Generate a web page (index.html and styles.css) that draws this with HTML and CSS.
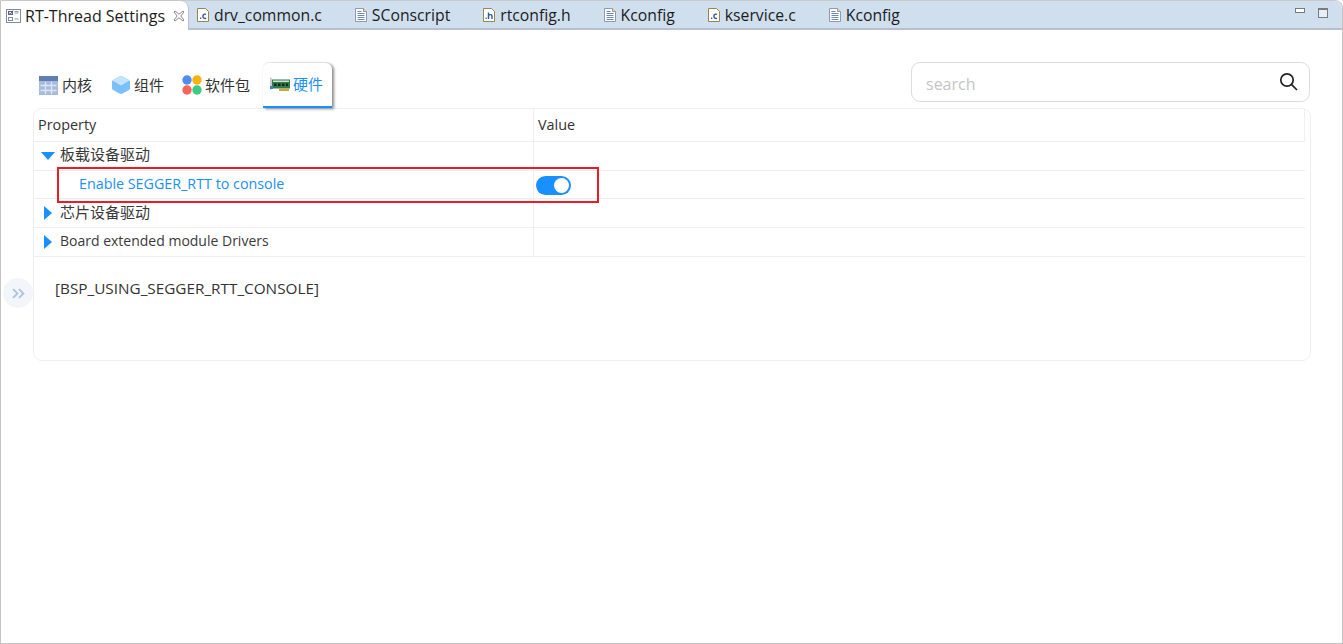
FILE: index.html
```html
<!DOCTYPE html>
<html lang="zh">
<head>
<meta charset="utf-8">
<title>RT-Thread Settings</title>
<link rel="stylesheet" href="styles.css">
</head>
<body>
<div class="window">
  <div class="editor-tabs">
    <div class="etab active">
      <svg class="eicon" viewBox="0 0 16 16"><rect x=".5" y="1.500" width="14" height="13" fill="#fff" stroke="#7f8ea3"/><rect x="2.500" y="3.500" width="4" height="3" fill="none" stroke="#667"/><path d="M3 4.500l1.500 1.500 2.500-3.500" fill="none" stroke="#3a5a8c"/><path d="M8.500 5h4M8.500 11h4M8.500 3.500h4" stroke="#8a9ab0"/><rect x="2.500" y="9.500" width="4" height="3" fill="none" stroke="#7f8ea3"/></svg>
      <span class="etitle">RT-Thread Settings</span>
      <svg class="eclose" viewBox="0 0 12 12"><path d="M2 1l4 3.200L10 1l1 1-3.200 4L11 10l-1 1-4-3.200L2 11l-1-1 3.200-4L1 2z" fill="#fff" stroke="#8a8a8a"/></svg>
    </div>
    <div class="etab"><svg class="eicon" viewBox="0 0 16 16"><use href="#file-c"/></svg><span class="etitle">drv_common.c</span></div>
    <div class="etab"><svg class="eicon" viewBox="0 0 16 16"><use href="#file-text"/></svg><span class="etitle">SConscript</span></div>
    <div class="etab"><svg class="eicon" viewBox="0 0 16 16"><use href="#file-h"/></svg><span class="etitle">rtconfig.h</span></div>
    <div class="etab"><svg class="eicon" viewBox="0 0 16 16"><use href="#file-text"/></svg><span class="etitle">Kconfig</span></div>
    <div class="etab"><svg class="eicon" viewBox="0 0 16 16"><use href="#file-c"/></svg><span class="etitle">kservice.c</span></div>
    <div class="etab"><svg class="eicon" viewBox="0 0 16 16"><use href="#file-text"/></svg><span class="etitle">Kconfig</span></div>
    <div class="win-controls">
      <span class="min-btn"></span>
      <span class="max-btn"></span>
    </div>
  </div>

  <div class="content">
    <div class="toolbar">
      <div class="cat-tabs">
        <div class="cat cat-kernel">
          <svg class="cat-icon" viewBox="0 0 20 20"><rect y="1" width="19" height="19" fill="#a9bbdc"/><rect y="1" width="19" height="5" fill="#5f7fb5"/><path d="M1.500 10.500h16M1.500 15.500h16M6.500 7v12M12.500 7v12" stroke="#dfe6f3" stroke-width="1.300"/></svg>
          <span>内核</span>
        </div>
        <div class="cat cat-comp">
          <svg class="cat-icon" viewBox="0 0 20 20"><path d="M8.500 1.500a3 3 0 0 1 3 0l6.500 3.600a2 2 0 0 1 1 1.700v6.400a2 2 0 0 1-1 1.700l-6.500 3.600a3 3 0 0 1-3 0L2 14.900a2 2 0 0 1-1-1.700V6.800a2 2 0 0 1 1-1.700z" fill="#7cc0fa"/><path d="M8.500 1.500a3 3 0 0 1 3 0L18.500 5.500 10 10.500 1.500 5.500z" fill="#c4e3fd"/></svg>
          <span>组件</span>
        </div>
        <div class="cat cat-pkg">
          <svg class="cat-icon" viewBox="0 0 20 20"><circle cx="5" cy="5" r="4.700" fill="#4d8df5"/><circle cx="15" cy="5" r="4.700" fill="#fbb10f"/><circle cx="5" cy="15" r="4.700" fill="#f8635a"/><circle cx="15" cy="15" r="4.700" fill="#3ccb7f"/></svg>
          <span>软件包</span>
        </div>
        <div class="cat cat-hw">
          <svg class="cat-icon hw-icon" viewBox="0 0 20 16"><path d="M0 1l2 1.500v11H0z" fill="#c8ccc8"/><path d="M2 3.500h18v9H2z" fill="#2f7a4c"/><path d="M3 4.500h16v1.500H3z" fill="#d6e4cf"/><path d="M4 7.500h2.500v2.500H4zM8 7.500h2.500v2.500H8zM12 7.500h2.500v2.500H12zM16 7.500h2v2.500h-2z" fill="#16281c"/><path d="M9 12.500h10V15H9z" fill="#cda93a"/><path d="M0 10h3v3H0z" fill="#3f7fd0"/></svg>
          <span>硬件</span>
        </div>
      </div>
      <div class="search">
        <span class="search-text">search</span>
        <svg class="search-icon" viewBox="0 0 20 20"><circle cx="8" cy="8" r="6.200" fill="none" stroke="#222" stroke-width="1.700"/><path d="M12.600 12.600l5.400 5.400" stroke="#222" stroke-width="1.700"/></svg>
      </div>
    </div>

    <div class="panel">
      <div class="row head">
        <div class="c1"><span>Property</span></div>
        <div class="c2"><span>Value</span></div>
      </div>
      <div class="row r-open">
        <div class="c1 tree"><svg class="arrow-d" viewBox="0 0 14 8"><path d="M0 0h14L7 8z"/></svg><span>板载设备驱动</span></div>
        <div class="c2"></div>
      </div>
      <div class="row r-sel">
        <div class="c1 child"><span>Enable SEGGER_RTT to console</span></div>
        <div class="c2"><span class="switch"><span class="knob"></span></span></div>
      </div>
      <div class="row r-chip">
        <div class="c1 tree"><svg class="arrow-r" viewBox="0 0 8 14"><path d="M0 0l8 7-8 7z"/></svg><span>芯片设备驱动</span></div>
        <div class="c2"></div>
      </div>
      <div class="row r-board">
        <div class="c1 tree"><svg class="arrow-r" viewBox="0 0 8 14"><path d="M0 0l8 7-8 7z"/></svg><span>Board extended module Drivers</span></div>
        <div class="c2"></div>
      </div>
      <div class="desc">[BSP_USING_SEGGER_RTT_CONSOLE]</div>
    </div>
    <div class="collapse-btn"><svg viewBox="0 0 12 10"><path d="M1 1l4 4-4 4M6.500 1l4 4-4 4" fill="none" stroke="#a9c3e0" stroke-width="1.700"/></svg></div>
    <div class="red-box"></div>
  </div>
</div>

<svg class="defs" width="0" height="0">
  <defs>
    <g id="file-base"><path d="M2.500 1.500h8l3 3v10h-11z" fill="#fff" stroke="#9a8450"/></g>
    <g id="file-c"><use href="#file-base"/><path d="M5 10.500h1.300V12H5z" fill="#3a5a8c"/><path d="M11 7.300a2.200 2.200 0 1 0 0 4" fill="none" stroke="#2d5a9c" stroke-width="1.400"/></g>
    <g id="file-h"><use href="#file-base"/><path d="M4.500 10.500h1.300V12H4.500z" fill="#3a5a8c"/><path d="M7.500 5.500V12M7.500 8.500c1-1.200 3.500-1.200 3.500 .5V12" fill="none" stroke="#2d5a9c" stroke-width="1.400"/></g>
    <g id="file-text"><path d="M2.500 1.500h8l3 3v10h-11z" fill="#fff" stroke="#8d9ab5"/><path d="M10.500 1.500v3h3" fill="#e5dcbc" stroke="#a39a78"/><path d="M4.500 4.500h4M4.500 6.500h7M4.500 8.500h7M4.500 10.500h7M4.500 12.500h7" stroke="#6f86b8"/></g>
  </defs>
</svg>
</body>
</html>
```
FILE: styles.css
```css
* { box-sizing: border-box; }
html, body { margin: 0; padding: 0; height: 100%; background: #fff; }
body { font-family: "Open Sans", "Noto Sans CJK SC", sans-serif; color: #333; overflow: hidden; }
.defs { position: absolute; }

.window {
  height: 644px;
  border: 1px solid #c4c4c4;
  border-top: 1px solid #c9c9c9;
  border-radius: 0 8px 0 0;
  display: flex;
  flex-direction: column;
  background: #fff;
}

.editor-tabs {
  height: 29px;
  flex: none;
  background: #d0dfee;
  border-bottom: 2px solid #b8c0d0;
  border-radius: 0 8px 0 0;
  display: flex;
  align-items: flex-start;
}
.etab {
  height: 28px;
  display: flex;
  align-items: center;
  padding-left: 6px;
  margin-right: 25px;
  font-size: 15.750px;
  color: #1c1c1c;
  white-space: nowrap;
}
.etab.active {
  width: 188px;
  height: 29px;
  margin-right: 0;
  font-size: 16px;
  background: #fff;
  border-right: 1px solid #b8c0d0;
  border-radius: 0 8px 0 0;
  padding-left: 5px;
  position: relative;
  z-index: 1;
}
.eicon { width: 16px; height: 16px; flex: none; margin-right: 3px; }
.eclose { width: 12px; height: 12px; margin-left: 8px; }
.win-controls { margin-left: auto; display: flex; gap: 13px; padding: 7px 14px 0 0; align-items: flex-start; }
.min-btn { width: 10px; height: 5px; border: 1px solid #7a7a7a; background: #fff; }
.max-btn { width: 10px; height: 10px; border: 1px solid #7a7a7a; border-top-width: 2px; background: #e6eef6; }

.content {
  position: relative;
  flex: 1;
  padding: 32px 32px 0 32px;
}

.toolbar {
  display: flex;
  justify-content: space-between;
  align-items: flex-start;
  height: 46px;
}
.cat-tabs { display: flex; align-items: flex-start; height: 45px; margin-top: 1px; }
.cat {
  display: flex;
  align-items: center;
  height: 45px;
  font-size: 15px;
  color: #333;
  padding-bottom: 2px;
}
.cat-kernel { padding-left: 6px; width: 78px; }
.cat-comp { width: 71px; }
.cat-pkg { width: 81px; }
.cat-hw {
  width: 69px;
  padding-left: 7px;
  color: #1890ff;
  background: #fff;
  border-bottom: 2px solid #1890ff;
  border-radius: 6px 6px 0 0;
  box-shadow: 2px 1px 3px rgba(0, 0, 0, .45), 0 -1px 1px rgba(0, 0, 0, .06);
}
.cat-icon { width: 20px; height: 20px; flex: none; margin-right: 3px; }
.hw-icon { height: 16px; margin-right: 3px; }

.search {
  width: 399px;
  height: 40px;
  border: 1px solid #dcdcdc;
  border-radius: 9px;
  display: flex;
  align-items: center;
  justify-content: space-between;
  padding: 0 10px 0 14px;
}
.search-text { font-size: 16px; color: #c4c4c4; margin-top: 3px; }
.search-icon { width: 20px; height: 20px; }

.panel {
  width: 1278px;
  height: 253px;
  border: 1px solid #efefef;
  border-radius: 9px;
  padding-right: 5px;
}
.row {
  display: flex;
  border-bottom: 1px solid #eeeeee;
  font-size: 14px;
  height: 29px;
  color: #333;
}
.row.head { height: 33px; font-size: 14.400px; border-right: 1px solid #f1f1f1; }
.row.head span { margin-bottom: 2px; }
.r-open .c1, .r-chip .c1 { font-size: 15px; }
.r-open .c1 span { margin-bottom: 6px; }
.r-chip .c1 span { margin-bottom: 4px; }
.r-board .c1 span { margin-bottom: 4px; }
.r-sel { height: 28px; }
.r-sel .c1 span { margin-bottom: 2px; }
.c1 { width: 500px; flex: none; padding-left: 4px; display: flex; align-items: center; border-right: 1px solid #eeeeee; }
.c2 { flex: 1; padding-left: 4px; display: flex; align-items: center; }
.tree { padding-left: 7px; color: #3a3a3a; }
.arrow-d { width: 14px; height: 8px; fill: #1890ff; margin-right: 5px; }
.arrow-r { width: 8px; height: 14px; fill: #1890ff; margin: 0 8px 0 3px; }
.child { padding-left: 45px; color: #1890ff; font-size: 14.300px; }
.switch {
  width: 35px;
  height: 19px;
  border-radius: 10px;
  background: #1890ff;
  display: flex;
  align-items: center;
  justify-content: flex-end;
  padding-right: 2px;
  margin: 2px 0 0 -2px;
}
.knob { width: 15px; height: 15px; border-radius: 50%; background: #fff; }
.desc { padding: 21px 0 0 21px; font-size: 15.300px; color: #333; }

.collapse-btn {
  position: absolute;
  left: 2px;
  top: 248px;
  width: 30px;
  height: 30px;
  border-radius: 50%;
  background: #f2f5f9;
  display: flex;
  align-items: center;
  justify-content: center;
}
.collapse-btn svg { width: 13px; height: 11px; }

.red-box {
  position: absolute;
  left: 56px;
  top: 137px;
  width: 542px;
  height: 36px;
  border: 2px solid #ed1c24;
  pointer-events: none;
}
```
